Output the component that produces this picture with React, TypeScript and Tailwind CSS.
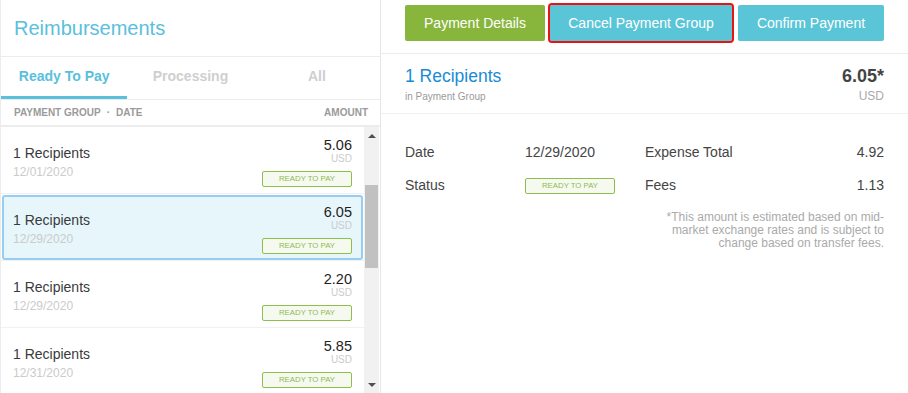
import React from "react";

const rows = [
  { amount: "5.06", date: "12/01/2020", selected: false },
  { amount: "6.05", date: "12/29/2020", selected: true },
  { amount: "2.20", date: "12/29/2020", selected: false },
  { amount: "5.85", date: "12/31/2020", selected: false },
];

function Badge() {
  return (
    <div className="flex h-[16px] w-[90px] items-center justify-center rounded-[2px] border border-[#8dc04a] bg-[#f6f9ef] text-[7.8px] leading-none text-[#8dbb52]">
      READY TO PAY
    </div>
  );
}

export default function App() {
  return (
    <div
      className="flex h-[393px] w-[908px] overflow-hidden border-l border-[#ececec] bg-white"
      style={{ fontFamily: '"Liberation Sans", Arial, sans-serif' }}
    >
      {/* Left panel */}
      <div className="flex w-[380px] shrink-0 flex-col border-r border-[#e6e6e6]">
        <div className="flex h-[57px] shrink-0 items-center border-b border-[#ececec] pl-[13px] pb-[1px] text-[20px] text-[#5ac0dd]">
          Reimbursements
        </div>
        <div className="flex h-[43px] shrink-0 border-b border-[#ececec] text-[14px] font-bold">
          <div className="flex flex-1 flex-col">
            <div className="flex flex-1 items-center justify-center text-[#5ac0dd]">Ready To Pay</div>
            <div className="h-[3px] bg-[#5ac0dd]" />
          </div>
          <div className="flex flex-1 flex-col">
            <div className="flex flex-1 items-center justify-center text-[#cfcfcf]">Processing</div>
            <div className="h-[3px]" />
          </div>
          <div className="flex flex-1 flex-col">
            <div className="flex flex-1 items-center justify-center text-[#cfcfcf]">All</div>
            <div className="h-[3px]" />
          </div>
        </div>
        <div className="flex h-[27px] shrink-0 items-center justify-between border-b-2 border-[#ececec] pl-[13px] pr-[12px] text-[10px] font-bold text-[#9a9a9a]">
          <div className="flex items-center">
            <span>PAYMENT GROUP</span>
            <span className="mx-[6px]">·</span>
            <span>DATE</span>
          </div>
          <span>AMOUNT</span>
        </div>
        <div className="flex min-h-0 flex-1">
          <div className="flex flex-1 flex-col overflow-hidden">
            {rows.map((r, i) => (
              <div
                key={i}
                className="flex h-[67px] shrink-0 flex-col border-b border-[#f1f1f1] px-[1px] pt-[1px]"
              >
                <div
                  className={
                    "flex h-[65px] shrink-0 justify-between rounded-[3px] border-2 pl-[9px] pr-[9px] " +
                    (r.selected ? "border-[#97cdf1] bg-[#e6f6fb]" : "border-transparent bg-white")
                  }
                >
                  <div className="flex flex-col pt-[15px]">
                    <div className="text-[14px] leading-[16px] text-[#3a3a3a]">1 Recipients</div>
                    <div className="mt-[4px] text-[12px] leading-[14px] text-[#cbcbcb]">{r.date}</div>
                  </div>
                  <div className="flex flex-col items-end pt-[7px]">
                    <div className="text-[14.5px] leading-[16px] text-[#1e1e1e]">{r.amount}</div>
                    <div className="text-[10px] leading-[12px] text-[#cbcbcb]">USD</div>
                    <div className="mt-[6px]">
                      <Badge />
                    </div>
                  </div>
                </div>
              </div>
            ))}
          </div>
          {/* scrollbar */}
          <div className="mr-[1px] flex w-[15px] shrink-0 flex-col bg-[#f1f1f1]">
            <div className="flex h-[17px] items-center justify-center">
              <div className="h-0 w-0 border-x-[4px] border-b-[4px] border-x-transparent border-b-[#505050]" />
            </div>
            <div className="h-[41px]" />
            <div className="mx-[1px] h-[83px] bg-[#c1c1c1]" />
            <div className="flex-1" />
            <div className="flex h-[17px] items-center justify-center">
              <div className="h-0 w-0 border-x-[4px] border-t-[4px] border-x-transparent border-t-[#505050]" />
            </div>
          </div>
        </div>
      </div>

      {/* Right panel */}
      <div className="flex flex-1 flex-col">
        <div className="flex h-[54px] shrink-0 items-start gap-[5px] border-b border-[#ececec] pl-[24px] pt-[5px] text-[14px] text-white">
          <div className="flex h-[36px] w-[140px] items-center justify-center rounded-[2px] bg-[#88b63c]">
            Payment Details
          </div>
          <div className="flex h-[36px] w-[182px] items-center justify-center rounded-[2px] bg-[#5bc5d8] outline-2 outline-[#ee1111]">
            Cancel Payment Group
          </div>
          <div className="ml-[1px] flex h-[36px] w-[146px] items-center justify-center rounded-[2px] bg-[#5bc5d8]">
            Confirm Payment
          </div>
        </div>
        <div className="flex h-[60px] shrink-0 justify-between border-b border-[#f0f0f0] pl-[24px] pr-[24px] pt-[12px]">
          <div className="flex flex-col">
            <div className="text-[17.5px] leading-[20px] text-[#1a8bd4]">1 Recipients</div>
            <div className="mt-[5px] text-[10px] leading-[12px] text-[#9a9a9a]">in Payment Group</div>
          </div>
          <div className="flex flex-col items-end">
            <div className="text-[18px] font-bold leading-[20px] text-[#444]">6.05*</div>
            <div className="mt-[3px] text-[12px] leading-[14px] text-[#aaa]">USD</div>
          </div>
        </div>
        <div className="flex pl-[24px] pr-[24px] pt-[22px] text-[14px] text-[#444]">
          <div className="flex w-[240px] shrink-0 flex-col">
            <div className="flex h-[33px] items-center">
              <div className="w-[120px]">Date</div>
              <div>12/29/2020</div>
            </div>
            <div className="flex h-[33px] items-center">
              <div className="w-[120px]">Status</div>
              <div className="flex h-[16px] w-[90px] items-center justify-center rounded-[2px] border border-[#8dc04a] bg-[#f6f9ef] text-[7.8px] leading-none text-[#8dbb52]">
                READY TO PAY
              </div>
            </div>
          </div>
          <div className="flex flex-1 flex-col">
            <div className="flex h-[33px] items-center justify-between">
              <div>Expense Total</div>
              <div>4.92</div>
            </div>
            <div className="flex h-[33px] items-center justify-between">
              <div>Fees</div>
              <div>1.13</div>
            </div>
            <div className="mt-[9px] text-right text-[12px] leading-[13px] text-[#aaa]">
              *This amount is estimated based on mid-market exchange rates and is subject to change based on transfer fees.
            </div>
          </div>
        </div>
      </div>
    </div>
  );
}
